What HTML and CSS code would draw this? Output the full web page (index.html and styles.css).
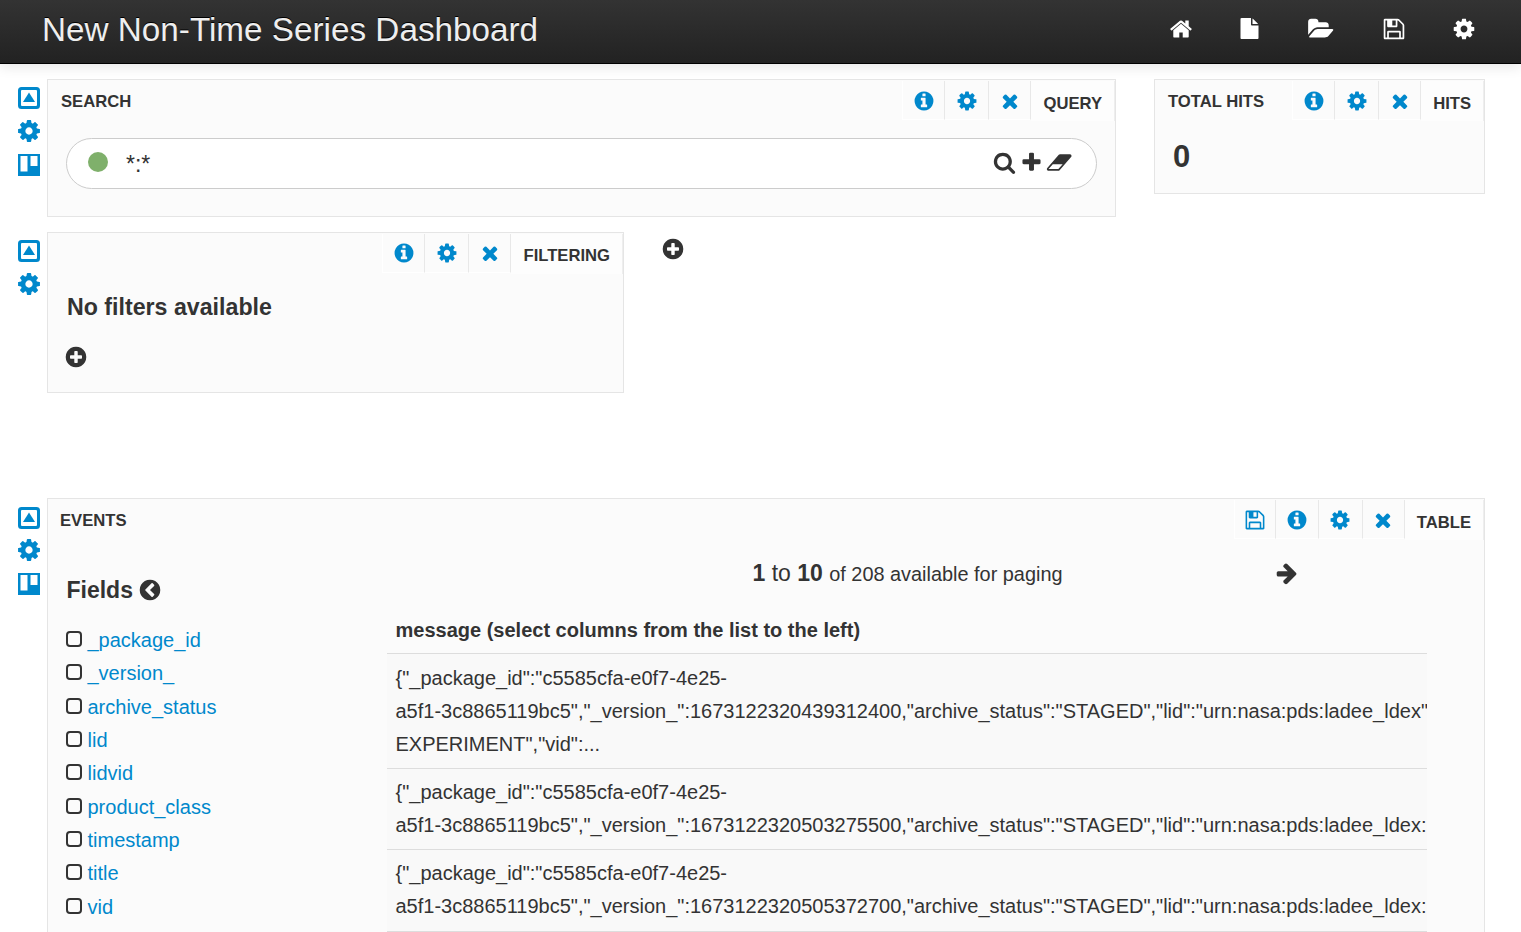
FILE: index.html

```html
<!DOCTYPE html>
<html lang="en">
<head>
  <meta charset="UTF-8">
  <title>New Non-Time Series Dashboard</title>
  <link rel="stylesheet" href="styles.css">
</head>
<body>

<svg class="defs" aria-hidden="true">
  <symbol id="i-cog" viewBox="0 0 1792 1792"><path d="M1152 896q0-106-75-181t-181-75-181 75-75 181 75 181 181 75 181-75 75-181zm512-109v222q0 12-8 23t-20 13l-185 28q-19 54-39 91 35 50 107 138 10 12 10 25t-9 23q-27 37-99 108t-94 71q-12 0-26-9l-138-108q-44 23-91 38-16 136-29 186-7 28-36 28h-222q-14 0-24.500-8.500t-11.500-21.500l-28-184q-49-16-90-37l-141 107q-10 9-25 9-14 0-25-11-126-114-165-168-7-10-7-23 0-12 8-23 15-21 51-66.500t54-70.500q-27-50-41-99l-183-27q-13-2-21-12.500t-8-23.500v-222q0-12 8-23t19-13l186-28q14-46 39-92-40-57-107-138-10-12-10-24 0-10 9-23 26-36 98.500-107.500t94.500-71.500q13 0 26 10l138 107q44-23 91-38 16-136 29-186 7-28 36-28h222q14 0 24.500 8.500t11.500 21.500l28 184q49 16 90 37l142-107q9-9 24-9 13 0 25 10 129 119 165 170 7 8 7 22 0 12-8 23-15 21-51 66.500t-54 70.500q26 50 41 98l183 28q13 2 21 12.500t8 23.500z"/></symbol>
  <symbol id="i-info" viewBox="0 0 1792 1792"><path d="M1152 1376v-160q0-14-9-23t-23-9h-96v-512q0-14-9-23t-23-9h-320q-14 0-23 9t-9 23v160q0 14 9 23t23 9h96v320h-96q-14 0-23 9t-9 23v160q0 14 9 23t23 9h448q14 0 23-9t9-23zm-128-896v-160q0-14-9-23t-23-9h-192q-14 0-23 9t-9 23v160q0 14 9 23t23 9h192q14 0 23-9t9-23zm640 416q0 209-103 385.500t-279.500 279.500-385.500 103-385.500-103-279.500-279.500-103-385.500 103-385.500 279.500-279.500 385.500-103 385.500 103 279.500 279.500 103 385.500z"/></symbol>
  <symbol id="i-times" viewBox="0 0 1792 1792"><path d="M1490 1322q0 40-28 68l-136 136q-28 28-68 28t-68-28l-294-294-294 294q-28 28-68 28t-68-28l-136-136q-28-28-28-68t28-68l294-294-294-294q-28-28-28-68t28-68l136-136q28-28 68-28t68 28l294 294 294-294q28-28 68-28t68 28l136 136q28 28 28 68t-28 68l-294 294 294 294q28 28 28 68z"/></symbol>
  <symbol id="i-plus-circle" viewBox="0 0 1792 1792"><path d="M1344 960v-128q0-26-19-45t-45-19h-256v-256q0-26-19-45t-45-19h-128q-26 0-45 19t-19 45v256h-256q-26 0-45 19t-19 45v128q0 26 19 45t45 19h256v256q0 26 19 45t45 19h128q26 0 45-19t19-45v-256h256q26 0 45-19t19-45zm320-64q0 209-103 385.500t-279.500 279.500-385.500 103-385.500-103-279.500-279.500-103-385.500 103-385.500 279.500-279.500 385.500-103 385.500 103 279.500 279.500 103 385.500z"/></symbol>
  <symbol id="i-plus" viewBox="0 0 1792 1792"><path d="M1600 736v192q0 40-28 68t-68 28h-416v416q0 40-28 68t-68 28h-192q-40 0-68-28t-28-68v-416h-416q-40 0-68-28t-28-68v-192q0-40 28-68t68-28h416v-416q0-40 28-68t68-28h192q40 0 68 28t28 68v416h416q40 0 68 28t28 68z"/></symbol>
  <symbol id="i-search" viewBox="0 0 1792 1792"><path d="M1216 832q0-185-131.500-316.500t-316.500-131.500-316.500 131.500-131.500 316.500 131.500 316.500 316.500 131.500 316.500-131.500 131.500-316.500zm512 832q0 52-38 90t-90 38q-54 0-90-38l-343-342q-179 124-399 124-143 0-273.500-55.500t-225-150-150-225-55.500-273.500 55.500-273.500 150-225 225-150 273.500-55.500 273.500 55.500 225 150 150 225 55.500 273.500q0 220-124 399l343 343q37 37 37 90z"/></symbol>
  <symbol id="i-eraser" viewBox="0 0 1920 1792"><path d="M832 1408l336-384h-768l-336 384h768zm1013-1077q15 34 9.500 71.500t-30.500 65.500l-896 1024q-38 44-96 44h-768q-38 0-69.500-20.500t-47.500-54.500q-15-34-9.500-71.500t30.500-65.500l896-1024q38-44 96-44h768q38 0 70 20.500t47 54.500z"/></symbol>
  <symbol id="i-home" viewBox="0 0 1792 1792"><path d="M1472 992v480q0 26-19 45t-45 19h-384v-384h-256v384h-384q-26 0-45-19t-19-45v-480q0-1 .5-3t.5-3l575-474 575 474q1 2 1 6zm223-69l-62 74q-8 9-21 11h-3q-13 0-21-7l-692-577-692 577q-12 8-24 7-13-2-21-11l-62-74q-8-10-7-23.500t11-21.500l719-599q32-26 76-26t76 26l244 204v-195q0-14 9-23t23-9h192q14 0 23 9t9 23v408l219 182q10 8 11 21.500t-7 23.500z"/></symbol>
  <symbol id="i-file" viewBox="0 0 1792 1792"><path d="M1152 512v-472q22 14 36 28l408 408q14 14 28 36h-472zm-128 32q0 40 28 68t68 28h544v1056q0 40-28 68t-68 28h-1344q-40 0-68-28t-28-68v-1600q0-40 28-68t68-28h800v544z"/></symbol>
  <symbol id="i-folder" viewBox="0 0 2048 1792"><path d="M1943 952q0 31-31 66l-336 396q-43 51-120.500 86.500t-143.500 35.500h-1088q-34 0-60.500-13t-26.500-43q0-31 31-66l336-396q43-51 120.500-86.500t143.500-35.500h1088q34 0 60.500 13t26.500 43zm-343-344v160h-832q-94 0-197 47.500t-164 119.500l-337 396-5 6q0-4-.5-12.500t-.5-12.500v-960q0-92 66-158t158-66h320q92 0 158 66t66 158v32h544q92 0 158 66t66 158z"/></symbol>
  <symbol id="i-save" viewBox="0 0 1792 1792"><path d="M512 1536h768v-384h-768v384zm896 0h128v-896q0-14-10-38.500t-20-34.500l-281-281q-10-10-34-20t-39-10v416q0 40-28 68t-68 28h-576q-40 0-68-28t-28-68v-416h-128v1280h128v-416q0-40 28-68t68-28h832q40 0 68 28t28 68v416zm-384-928v-320q0-13-9.500-22.500t-22.500-9.500h-192q-13 0-22.500 9.500t-9.500 22.500v320q0 13 9.500 22.500t22.500 9.500h192q13 0 22.500-9.500t9.500-22.500zm640 32v928q0 40-28 68t-68 28h-1344q-40 0-68-28t-28-68v-1344q0-40 28-68t68-28h928q40 0 88 20t76 48l280 280q28 28 48 76t20 88z"/></symbol>
  <symbol id="i-collapse" viewBox="0 0 22 22"><path fill-rule="evenodd" d="M3.500 0h15a3.500 3.500 0 0 1 3.500 3.500v15a3.500 3.500 0 0 1-3.500 3.500h-15a3.500 3.500 0 0 1-3.500-3.500v-15a3.500 3.500 0 0 1 3.500-3.500zM4 3a1 1 0 0 0-1 1v14a1 1 0 0 0 1 1h14a1 1 0 0 0 1-1V4a1 1 0 0 0-1-1z"/><path d="M11 5.500l6 9.500H5z"/></symbol>
  <symbol id="i-trello" viewBox="0 0 22 22"><path fill-rule="evenodd" d="M0 0h22v22H0zM2.500 2v15.500h7V2zM12.500 2v10h7V2z"/></symbol>
  <symbol id="i-chevron" viewBox="0 0 1792 1792"><path d="M1099 1395l102-102q19-19 19-45t-19-45l-307-307 307-307q19-19 19-45t-19-45l-102-102q-19-19-45-19t-45 19l-454 454q-19 19-19 45t19 45l454 454q19 19 45 19t45-19zm565-499q0 209-103 385.500t-279.500 279.500-385.500 103-385.500-103-279.500-279.500-103-385.500 103-385.500 279.500-279.500 385.500-103 385.500 103 279.500 279.500 103 385.500z"/></symbol>
  <symbol id="i-arrow" viewBox="0 0 1792 1792"><path d="M1600 960q0 54-37 91l-651 651q-39 37-91 37-51 0-90-37l-75-75q-38-38-38-91t38-91l293-293h-704q-52 0-84.500-37.500t-32.500-90.500v-128q0-53 32.500-90.500t84.500-37.500h704l-293-294q-38-36-38-90t38-90l75-75q38-38 90-38 53 0 91 38l651 651q37 35 37 90z"/></symbol>
</svg>

<header class="navbar">
  <h1 class="brand">New Non-Time Series Dashboard</h1>
  <nav class="nav-icons">
    <svg class="nav-icon"><use href="#i-home"/></svg>
    <svg class="nav-icon nav-icon-file"><use href="#i-file"/></svg>
    <svg class="nav-icon nav-icon-wide"><use href="#i-folder"/></svg>
    <svg class="nav-icon"><use href="#i-save"/></svg>
    <svg class="nav-icon"><use href="#i-cog"/></svg>
  </nav>
</header>

<main class="dashboard">

  <div class="row row-first">
    <div class="side">
      <svg class="side-icon"><use href="#i-collapse"/></svg>
      <svg class="side-icon side-cog"><use href="#i-cog"/></svg>
      <svg class="side-icon side-trello"><use href="#i-trello"/></svg>
    </div>
    <section class="panel panel-search">
      <div class="panel-head">
        <span class="panel-title">SEARCH</span>
        <div class="tabs">
          <a class="tab"><svg class="tab-icon"><use href="#i-info"/></svg></a>
          <a class="tab tab-cog"><svg class="tab-icon"><use href="#i-cog"/></svg></a>
          <a class="tab tab-times"><svg class="tab-icon"><use href="#i-times"/></svg></a>
          <span class="tab tab-label">QUERY</span>
        </div>
      </div>
      <div class="search-box">
        <span class="search-dot"></span>
        <span class="search-query">*:*</span>
        <span class="search-actions">
          <svg class="search-icon search-mag"><use href="#i-search"/></svg>
          <svg class="search-icon"><use href="#i-plus"/></svg>
          <svg class="search-icon search-eraser"><use href="#i-eraser"/></svg>
        </span>
      </div>
    </section>

    <section class="panel panel-hits">
      <div class="panel-head">
        <span class="panel-title">TOTAL HITS</span>
        <div class="tabs">
          <a class="tab"><svg class="tab-icon"><use href="#i-info"/></svg></a>
          <a class="tab tab-cog"><svg class="tab-icon"><use href="#i-cog"/></svg></a>
          <a class="tab tab-times"><svg class="tab-icon"><use href="#i-times"/></svg></a>
          <span class="tab tab-label">HITS</span>
        </div>
      </div>
      <div class="hits-count">0</div>
    </section>
  </div>

  <div class="row row-second">
    <div class="side">
      <svg class="side-icon"><use href="#i-collapse"/></svg>
      <svg class="side-icon side-cog"><use href="#i-cog"/></svg>
    </div>
    <section class="panel panel-filter">
      <div class="panel-head">
        <div class="tabs">
          <a class="tab"><svg class="tab-icon"><use href="#i-info"/></svg></a>
          <a class="tab tab-cog"><svg class="tab-icon"><use href="#i-cog"/></svg></a>
          <a class="tab tab-times"><svg class="tab-icon"><use href="#i-times"/></svg></a>
          <span class="tab tab-label">FILTERING</span>
        </div>
      </div>
      <h4 class="no-filters">No filters available</h4>
      <svg class="add-icon add-filter"><use href="#i-plus-circle"/></svg>
    </section>
    <svg class="add-icon add-panel"><use href="#i-plus-circle"/></svg>
  </div>

  <div class="row row-third">
    <div class="side">
      <svg class="side-icon"><use href="#i-collapse"/></svg>
      <svg class="side-icon side-cog"><use href="#i-cog"/></svg>
      <svg class="side-icon side-trello"><use href="#i-trello"/></svg>
    </div>
    <section class="panel panel-events">
      <div class="panel-head">
        <span class="panel-title">EVENTS</span>
        <div class="tabs">
          <a class="tab tab-times"><svg class="tab-icon"><use href="#i-save"/></svg></a>
          <a class="tab"><svg class="tab-icon"><use href="#i-info"/></svg></a>
          <a class="tab tab-cog"><svg class="tab-icon"><use href="#i-cog"/></svg></a>
          <a class="tab tab-times"><svg class="tab-icon"><use href="#i-times"/></svg></a>
          <span class="tab tab-label">TABLE</span>
        </div>
      </div>
      <div class="events-body">
        <aside class="fields">
          <h4 class="fields-title">Fields <svg class="chevron"><use href="#i-chevron"/></svg></h4>
          <ul class="field-list">
            <li><span class="check"></span><a>_package_id</a></li>
            <li><span class="check"></span><a>_version_</a></li>
            <li><span class="check"></span><a>archive_status</a></li>
            <li><span class="check"></span><a>lid</a></li>
            <li><span class="check"></span><a>lidvid</a></li>
            <li><span class="check"></span><a>product_class</a></li>
            <li><span class="check"></span><a>timestamp</a></li>
            <li><span class="check"></span><a>title</a></li>
            <li><span class="check"></span><a>vid</a></li>
          </ul>
        </aside>
        <div class="results">
          <div class="pager">
            <span class="pager-text"><strong>1</strong> to <strong>10</strong> <small>of 208 available for paging</small></span>
            <svg class="pager-next"><use href="#i-arrow"/></svg>
          </div>
          <div class="table-head">message (select columns from the list to the left)</div>
          <div class="table-row table-row-first">
            <div>{"_package_id":"c5585cfa-e0f7-4e25-</div>
            <div>a5f1-3c8865119bc5","_version_":1673122320439312400,"archive_status":"STAGED","lid":"urn:nasa:pds:ladee_ldex"</div>
            <div>EXPERIMENT","vid":...</div>
          </div>
          <div class="table-row">
            <div>{"_package_id":"c5585cfa-e0f7-4e25-</div>
            <div>a5f1-3c8865119bc5","_version_":1673122320503275500,"archive_status":"STAGED","lid":"urn:nasa:pds:ladee_ldex:</div>
          </div>
          <div class="table-row table-row-last">
            <div>{"_package_id":"c5585cfa-e0f7-4e25-</div>
            <div>a5f1-3c8865119bc5","_version_":1673122320505372700,"archive_status":"STAGED","lid":"urn:nasa:pds:ladee_ldex:</div>
          </div>
        </div>
      </div>
    </section>
  </div>

</main>

</body>
</html>
```

FILE: styles.css

```css
html, body { margin: 0; height: 932px; overflow: hidden; }
body { font-family: "Liberation Sans", Arial, sans-serif; color: #333; background: #fff; }
.defs { display: none; }
a { color: #0088cc; }
svg { fill: currentColor; display: block; }

/* top bar */
.navbar {
  display: flex;
  align-items: center;
  justify-content: space-between;
  box-sizing: border-box;
  height: 64px;
  padding: 0 45px 4px 42px;
  background: linear-gradient(#333, #222);
  border-bottom: 1px solid #000;
  box-shadow: 0 3px 12px rgba(0, 0, 0, 0.1);
}
.brand { margin: 0; font-size: 33.280px; font-weight: normal; color: #eee; text-shadow: 0 -1px 0 #000; }
.nav-icons { display: flex; align-items: center; gap: 46px; margin-bottom: 2px; color: #fff; }
.nav-icon { width: 24px; height: 24px; }
.nav-icon-file { width: 21px; height: 21px; margin-right: 1px; }
.nav-icon-wide { width: 28px; margin-right: 1px; }

/* rows */
.row { display: flex; align-items: flex-start; }
.row-first { margin-top: 15px; }
.row-second { margin-top: 15px; }
.row-third { margin-top: 105px; }

.side {
  width: 47px;
  flex: none;
  box-sizing: border-box;
  padding: 8px 7px 0 18px;
  display: flex;
  flex-direction: column;
  gap: 11px;
  color: #0088cc;
}
.row-third .side { padding-top: 9px; gap: 10px; }
.side-icon { width: 22px; height: 22px; }
.side-cog { transform: scale(1.16); }
.side-trello { margin-top: 1px; }
.row-third .side-trello { margin-top: 2px; }

/* panels */
.panel { box-sizing: border-box; background: #fbfbfb; border: 1px solid #e5e5e5; }
.panel-head { display: flex; justify-content: space-between; align-items: flex-start; }
.panel-title { font-size: 16.640px; font-weight: bold; padding: 12px 0 0 13px; }
.panel-events .panel-title { padding-left: 12px; }
.tabs { display: flex; margin-left: auto; padding-top: 1px; }
.tab {
  display: flex;
  align-items: center;
  justify-content: center;
  box-sizing: border-box;
  width: 43px;
  height: 39px;
  border-right: 1px solid #e8e8e8;
  border-bottom: 1px solid #fff;
  background: #fbfbfb;
  color: #0088cc;
}
.tab:first-child { border-left: 1px solid #fff; }
.tab-cog { width: 44px; }
.tab-times { width: 42px; }
.panel-search .tab, .panel-hits .tab { padding-top: 1px; }
.panel-filter .tab { padding-bottom: 1px; }
.panel-events .tab { padding-top: 2px; }
.tab-icon { width: 22px; height: 22px; }
.tabs .tab-label {
  width: auto;
  height: 40px;
  padding: 4px 12px 0 12px;
  font-size: 16.640px;
  font-weight: bold;
  color: #333;
  background: #fdfdfd;
  border-right: 1px solid #eee;
  border-bottom: 0;
}
.panel-search .tabs .tab-label, .panel-hits .tabs .tab-label, .panel-events .tabs .tab-label { padding-top: 6px; }

.panel-search { width: 1069px; height: 138px; }
.panel-hits { width: 331px; height: 115px; margin-left: 38px; }
.panel-filter { width: 577px; height: 161px; }
.panel-events { width: 1438px; height: 460px; }

.search-box {
  display: flex;
  align-items: center;
  box-sizing: border-box;
  height: 51px;
  margin: 17px 18px 0 18px;
  padding: 0 22px 2px 21px;
  background: #fff;
  border: 1px solid #ccc;
  border-radius: 26px;
}
.search-dot { width: 20px; height: 20px; border-radius: 50%; background: #7fb06b; margin-bottom: 2px; }
.search-query { margin: 4px 0 0 18px; font-size: 23px; color: #333; flex: 1; }
.search-actions { display: flex; align-items: center; gap: 2px; }
.search-icon { width: 23px; height: 23px; }
.search-mag { margin-right: 2px; }
.search-eraser { width: 28px; margin-left: 1px; }

.hits-count { padding: 18px 0 0 18px; font-size: 31px; font-weight: bold; }

.no-filters { margin: 20px 0 0 19px; font-size: 23.200px; font-weight: bold; }
.add-icon { width: 24px; height: 24px; color: #333; }
.add-filter { margin: 24px 0 0 16px; }
.add-panel { margin: 5px 0 0 37px; }

/* events table */
.events-body { display: flex; }
.fields { width: 339px; flex: none; padding: 37px 0 0 18.500px; box-sizing: border-box; }
.fields-title { display: flex; align-items: center; gap: 5px; margin: 0; font-size: 23px; font-weight: bold; }
.chevron { width: 24px; height: 24px; margin-bottom: 2px; }
.field-list { list-style: none; margin: 20px 0 0; padding: 0; font-size: 20px; }
.field-list li { display: flex; align-items: center; height: 33.300px; }
.check {
  box-sizing: border-box;
  width: 16px;
  height: 16px;
  margin: 0 5px 3px -1px;
  border: 2px solid #333;
  border-radius: 4px;
}
.field-list a { margin-left: 1px; }

.results { width: 1040px; flex: none; overflow: hidden; }
.pager { position: relative; padding-top: 20px; text-align: center; height: 30px; font-size: 23px; }
.pager small { font-size: 19.900px; }
.pager-text { display: inline-block; margin-left: 1px; }
.pager-next { position: absolute; left: 888px; top: 21px; width: 24px; height: 24px; color: #333; }
.table-head { padding: 29px 0 11px 8.500px; font-size: 20px; font-weight: bold; border-bottom: 1px solid #ddd; }
.table-row {
  padding: 7px 0 7px 8.500px;
  font-size: 20px;
  line-height: 33px;
  white-space: nowrap;
  overflow: hidden;
  background: #f9f9f9;
  border-bottom: 1px solid #ddd;
}
.table-row-first { padding-top: 8px; }
.table-row-last { padding-bottom: 8px; }
```
